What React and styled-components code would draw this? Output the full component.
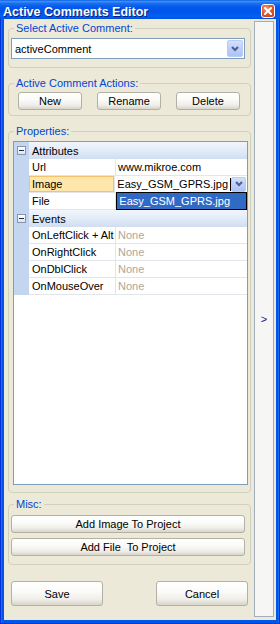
import React from 'react';
import styled, { createGlobalStyle } from 'styled-components';

const Global = createGlobalStyle`
  html, body { margin: 0; padding: 0; background: #0055EA; }
  body { font-family: "Liberation Sans", Arial, sans-serif; font-size: 11px; color: #000; }
  #root { width: 280px; height: 624px; }
  * { box-sizing: border-box; }
`;

const FONT = `"Liberation Sans", Arial, sans-serif`;

const Window = styled.div`
  width: 280px;
  height: 624px;
  display: flex;
  flex-direction: column;
  background: #0055EA;
  box-shadow: inset 1px 0 #0831D9, inset -1px 0 #0831D9, inset 0 -1px #0831D9, inset 2px 0 #166AEE, inset -2px 0 #166AEE;
`;

const TitleBar = styled.div`
  height: 19px;
  flex: 0 0 19px;
  display: flex;
  align-items: center;
  justify-content: space-between;
  padding: 3px 5px 0 3px;
  background: linear-gradient(to bottom, #0A61E4 0%, #3C8DF7 8%, #1B6FEE 18%, #0058EE 38%, #0055EA 65%, #0060F5 88%, #0050D8 100%);
`;

const Title = styled.div`
  color: #fff;
  font: bold 12.5px ${FONT};
  text-shadow: 1px 1px #0A1E7A;
  white-space: nowrap;
  margin-top: 2px;
`;

const CloseBtn = styled.div`
  width: 14px;
  height: 14px;
  border: 1px solid #fff;
  border-radius: 3px;
  background: radial-gradient(circle at 35% 30%, #F29A7E 0%, #E0582F 45%, #C03A16 100%);
  display: flex;
  align-items: center;
  justify-content: center;
`;

const Body = styled.div`
  flex: 1;
  margin: 0 4px 4px 4px;
  background: #ECE9D8;
  display: flex;
  min-height: 0;
`;

const MainCol = styled.div`
  width: 250px;
  flex: 0 0 250px;
  padding: 3px 3px 0 4px;
  display: flex;
  flex-direction: column;
`;

const SideStrip = styled.div`
  width: 20px;
  margin: 2px 2px 3px 0;
  border: 1px solid #A3AEBD;
  background: #F6F6F4;
  display: flex;
  align-items: center;
  justify-content: center;
  color: #10188A;
  font: 11px ${FONT};
`;

const Group = styled.fieldset`
  margin: ${p => p.$mt || 0}px 0 0 0;
  padding: 0;
  border: 1px solid #D0D0BF;
  border-radius: 4px;
  min-width: 0;
`;

const Legend = styled.legend`
  margin-left: 5px;
  padding: 0 2px;
  color: #0046D5;
  font: 11px ${FONT};
  line-height: 13px;
`;

const GroupBody = styled.div`
  padding: ${p => p.$pad};
  display: flex;
  flex-direction: ${p => (p.$row ? 'row' : 'column')};
  gap: ${p => p.$gap || 0}px;
`;

const Combo = styled.div`
  height: 21px;
  width: 234px;
  border: 1px solid #7F9DB9;
  background: #fff;
  display: flex;
  align-items: center;
  padding: 1px;
`;

const ComboText = styled.div`
  flex: 1;
  padding-left: 2px;
  font: 11px ${FONT};
  white-space: nowrap;
`;

const DropBtn = styled.div`
  width: ${p => p.$w || 16}px;
  height: ${p => p.$h || 17}px;
  border: 1px solid #B9CAF3;
  border-radius: 2px;
  background: linear-gradient(to bottom, #D4E1FD 0%, #BFD1FA 45%, #ADC3F5 100%);
  display: flex;
  align-items: center;
  justify-content: center;
  flex: 0 0 auto;
`;

const Chevron = () => (
  <svg width="8" height="6" viewBox="0 0 8 6">
    <path d="M1 1 L4 4 L7 1" fill="none" stroke="#4D6185" strokeWidth="2" />
  </svg>
);

const Btn = styled.button`
  font: 11px ${FONT};
  color: #000;
  width: ${p => (p.$w ? `${p.$w}px` : '100%')};
  height: ${p => p.$h || 18}px;
  border: 1px solid #B3B0A4;
  border-radius: 3px;
  background: linear-gradient(to bottom, #FFFFFF 0%, #FBFBF9 40%, #EFEEE9 75%, #D9D4CA 100%);
  padding: 0;
  white-space: pre;
  display: flex;
  align-items: center;
  justify-content: center;
`;

const Grid = styled.div`
  width: 235px;
  height: 344px;
  border: 1px solid #7F9DB9;
  background: #fff;
  display: flex;
  flex-direction: column;
`;

const CategoryRow = styled.div`
  height: 17px;
  flex: 0 0 17px;
  display: flex;
  align-items: center;
  background: linear-gradient(to bottom, #F2F6FC 0%, #E2EBF8 50%, #D0DEF2 100%);
  font: 11px ${FONT};
`;

const CatGutter = styled.div`
  width: 15px;
  height: 100%;
  display: flex;
  align-items: center;
  justify-content: center;
  background: #C3D5EF;
`;

const MinusBox = styled.div`
  width: 9px;
  height: 9px;
  border: 1px solid #8496B3;
  background: linear-gradient(to bottom, #FFFFFF, #DCE3EE);
  display: flex;
  align-items: center;
  justify-content: center;
  &::after {
    content: '';
    width: 5px;
    height: 1px;
    background: #1E2C48;
  }
`;

const CatLabel = styled.div`
  padding-left: 3px;
`;

const PropRow = styled.div`
  height: 17px;
  flex: 0 0 17px;
  display: flex;
  font: 11px ${FONT};
`;

const Gutter = styled.div`
  width: 15px;
  background: #C3D5EF;
`;

const NameCell = styled.div`
  width: 87px;
  padding-left: 3px;
  display: flex;
  align-items: center;
  border-right: 1px solid #E2E6EC;
  border-bottom: 1px solid #E2E6EC;
  background: ${p => (p.$hl ? '#FFE6AA' : '#fff')};
  box-shadow: ${p => (p.$hl ? 'inset 0 0 0 1px #F3C26B' : 'none')};
  white-space: nowrap;
`;

const ValueCell = styled.div`
  flex: 1;
  position: relative;
  padding-left: 2px;
  display: flex;
  align-items: center;
  border-bottom: 1px solid #E2E6EC;
  color: ${p => (p.$muted ? '#ACA899' : '#000')};
  white-space: nowrap;
`;

const Caret = styled.span`
  width: 1px;
  height: 13px;
  background: #000;
  margin-left: 2px;
`;

const EditBtnWrap = styled.div`
  margin-left: auto;
  margin-right: 1px;
`;

const DropList = styled.div`
  position: absolute;
  left: 1px;
  top: 16px;
  width: 131px;
  height: 18px;
  border: 1px solid #000;
  background: #316AC5;
  color: #fff;
  padding-left: 2px;
  display: flex;
  align-items: center;
  z-index: 2;
`;

const Footer = styled.div`
  margin-top: 16px;
  display: flex;
  justify-content: space-between;
  padding: 0 3px 0 3px;
`;

const props = [
  { name: 'Url', value: 'www.mikroe.com' },
  { name: 'Image', value: 'Easy_GSM_GPRS.jpg', edit: true },
  { name: 'File', value: '' },
];

const events = ['OnLeftClick + Alt', 'OnRightClick', 'OnDblClick', 'OnMouseOver'];

export default function App() {
  return (
    <>
      <Global />
      <Window>
        <TitleBar>
          <Title>Active Comments Editor</Title>
          <CloseBtn>
            <svg width="8" height="8" viewBox="0 0 8 8">
              <path d="M1 1 L7 7 M7 1 L1 7" stroke="#fff" strokeWidth="2" strokeLinecap="square" />
            </svg>
          </CloseBtn>
        </TitleBar>
        <Body>
          <MainCol>
            <Group>
              <Legend>Select Active Comment:</Legend>
              <GroupBody $pad="3px 5px 8px 2px">
                <Combo>
                  <ComboText>activeComment</ComboText>
                  <DropBtn><Chevron /></DropBtn>
                </Combo>
              </GroupBody>
            </Group>

            <Group $mt={9}>
              <Legend>Active Comment Actions:</Legend>
              <GroupBody $row $gap={15} $pad="2px 0 5px 9px">
                <Btn $w={64}>New</Btn>
                <Btn $w={64}>Rename</Btn>
                <Btn $w={64}>Delete</Btn>
              </GroupBody>
            </Group>

            <Group $mt={9}>
              <Legend>Properties:</Legend>
              <GroupBody $pad="3px 2px 7px 4px">
                <Grid>
                  <CategoryRow>
                    <CatGutter><MinusBox /></CatGutter>
                    <CatLabel>Attributes</CatLabel>
                  </CategoryRow>
                  {props.map(p => (
                    <PropRow key={p.name}>
                      <Gutter />
                      <NameCell $hl={p.edit}>{p.name}</NameCell>
                      <ValueCell>
                        {p.value}
                        {p.edit && (
                          <>
                            <Caret />
                            <EditBtnWrap>
                              <DropBtn $w={15} $h={15}><Chevron /></DropBtn>
                            </EditBtnWrap>
                            <DropList>Easy_GSM_GPRS.jpg</DropList>
                          </>
                        )}
                      </ValueCell>
                    </PropRow>
                  ))}
                  <CategoryRow>
                    <CatGutter><MinusBox /></CatGutter>
                    <CatLabel>Events</CatLabel>
                  </CategoryRow>
                  {events.map(e => (
                    <PropRow key={e}>
                      <Gutter />
                      <NameCell>{e}</NameCell>
                      <ValueCell $muted>None</ValueCell>
                    </PropRow>
                  ))}
                </Grid>
              </GroupBody>
            </Group>

            <Group $mt={5}>
              <Legend>Misc:</Legend>
              <GroupBody $gap={5} $pad="4px 5px 8px 2px">
                <Btn>Add Image To Project</Btn>
                <Btn>{'Add File  To Project'}</Btn>
              </GroupBody>
            </Group>

            <Footer>
              <Btn $w={92} $h={25}>Save</Btn>
              <Btn $w={92} $h={25}>Cancel</Btn>
            </Footer>
          </MainCol>
          <SideStrip>&gt;</SideStrip>
        </Body>
      </Window>
    </>
  );
}
